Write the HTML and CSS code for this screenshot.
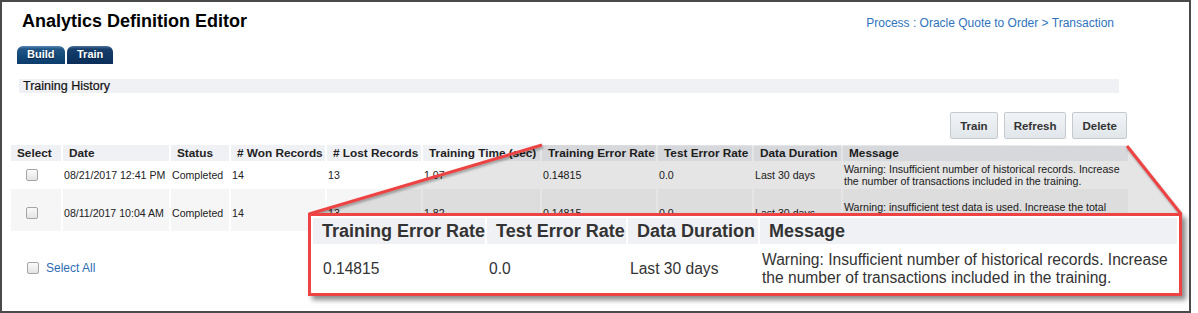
FILE: index.html
```html
<!DOCTYPE html>
<html lang="en">

<head>
    <meta charset="UTF-8">
    <title>Analytics Definition Editor</title>
    <link rel="stylesheet" href="styles.css">
</head>

<body>
    <div class="frame">
        <div class="page-header">
            <h1 class="title">Analytics Definition Editor</h1>
            <a class="crumbs" href="#">Process : Oracle Quote to Order &gt; Transaction</a>
        </div>

        <div class="tabs">
            <span class="tab tab-build">Build</span>
            <span class="tab tab-train">Train</span>
        </div>

        <div class="section-bar">Training History</div>

        <div class="actions">
            <button class="btn">Train</button>
            <button class="btn">Refresh</button>
            <button class="btn">Delete</button>
        </div>

        <table class="history">
            <colgroup>
                <col style="width:50px">
                <col style="width:106px">
                <col style="width:58px">
                <col style="width:94px">
                <col style="width:94px">
                <col style="width:117px">
                <col style="width:114px">
                <col style="width:94px">
                <col style="width:87px">
                <col>
            </colgroup>
            <thead>
                <tr>
                    <th>Select</th>
                    <th>Date</th>
                    <th>Status</th>
                    <th># Won Records</th>
                    <th># Lost Records</th>
                    <th>Training Time (sec)</th>
                    <th>Training Error Rate</th>
                    <th>Test Error Rate</th>
                    <th>Data Duration</th>
                    <th>Message</th>
                </tr>
            </thead>
            <tbody>
                <tr class="row-a">
                    <td class="sel"><input type="checkbox" class="check"></td>
                    <td class="nowrap">08/21/2017 12:41 PM</td>
                    <td>Completed</td>
                    <td>14</td>
                    <td>13</td>
                    <td>1.07</td>
                    <td>0.14815</td>
                    <td>0.0</td>
                    <td class="nowrap">Last 30 days</td>
                    <td>Warning: Insufficient number of historical records. Increase the number of transactions included in the training.</td>
                </tr>
                <tr class="row-b">
                    <td class="sel"><input type="checkbox" class="check"></td>
                    <td class="nowrap">08/11/2017 10:04 AM</td>
                    <td>Completed</td>
                    <td>14</td>
                    <td>13</td>
                    <td>1.82</td>
                    <td>0.14815</td>
                    <td>0.0</td>
                    <td class="nowrap">Last 30 days</td>
                    <td>Warning: insufficient test data is used. Increase the total number of records for training.</td>
                </tr>
            </tbody>
        </table>

        <label class="select-all">
            <input type="checkbox" class="check">
            <span>Select All</span>
        </label>

        <!-- zoom callout -->
        <svg class="zoom-lines" width="1198" height="313" viewBox="0 0 1198 313">
            <polygon points="542,145 1127,146 1182,214 308,214" fill="rgba(0,0,0,0.1)" />
            <line x1="542" y1="145" x2="309" y2="214" stroke="#ee4343" stroke-width="3" />
            <line x1="1127" y1="146" x2="1181" y2="214" stroke="#ee4343" stroke-width="3" />
        </svg>

        <div class="callout">
            <table class="callout-table">
                <colgroup>
                    <col style="width:172px">
                    <col style="width:139px">
                    <col style="width:130px">
                    <col>
                </colgroup>
                <tr>
                    <th>Training Error Rate</th>
                    <th>Test Error Rate</th>
                    <th>Data Duration</th>
                    <th>Message</th>
                </tr>
                <tr>
                    <td class="first">0.14815</td>
                    <td>0.0</td>
                    <td>Last 30 days</td>
                    <td>Warning: Insufficient number of historical records. Increase the number of transactions included in the training.</td>
                </tr>
            </table>
        </div>
    </div>
</body>

</html>
```

FILE: styles.css
```css
body {
    margin: 0;
    font-family: "Liberation Sans", Arial, sans-serif;
    background-color: #fff;
    color: #222;
}

.frame {
    position: relative;
    width: 1191px;
    height: 313px;
    box-sizing: border-box;
    border: 2px solid #4a4a4a;
    overflow: hidden;
}

.page-header {
    display: flex;
    justify-content: space-between;
    align-items: baseline;
    padding: 8px 75px 0 20px;
}

.title {
    margin: 0;
    font-size: 18px;
    line-height: 22px;
    font-weight: bold;
    color: #000;
}

.crumbs {
    font-size: 12px;
    color: #2e73bd;
    text-decoration: none;
}

/* tabs */
.tabs {
    display: flex;
    gap: 2px;
    margin-top: 14px;
    padding-left: 15px;
}

.tab {
    height: 18px;
    line-height: 17px;
    box-sizing: border-box;
    padding: 0 10px;
    font-size: 11px;
    font-weight: bold;
    color: #fff;
    text-shadow: 0 1px 1px #06203f;
    border-radius: 6px 6px 0 0;
}

.tab-build {
    width: 48px;
    background: linear-gradient(#5b87b3 0, #215686 3px, #124877 60%, #0c3c6c 100%);
}

.tab-train {
    width: 46px;
    background: linear-gradient(#50729b 0, #183f6c 3px, #0f3663 60%, #0a2e58 100%);
}

.section-bar {
    width: 1100px;
    margin: 15px 0 0 17px;
    height: 14px;
    line-height: 14px;
    padding-left: 4px;
    box-sizing: border-box;
    background-color: #f0f1f5;
    font-size: 12.5px;
    color: #111;
    -webkit-text-stroke: 0.2px #111;
}

/* buttons */
.actions {
    display: flex;
    justify-content: flex-end;
    gap: 6px;
    margin-top: 19px;
    padding-right: 62px;
}

.btn {
    height: 27px;
    padding: 0 9px;
    font-family: "Liberation Sans", Arial, sans-serif;
    font-size: 11.5px;
    font-weight: bold;
    color: #333;
    background: linear-gradient(#f1f4f7, #e1e6ea);
    border: 1px solid #c6cacf;
    border-radius: 2px;
}

/* history table */
.history {
    width: 1121px;
    margin: 4px 0 0 7px;
    table-layout: fixed;
    border-collapse: separate;
    border-spacing: 2px;
    font-size: 10.6px;
}

.history th {
    height: 16px;
    padding: 0 0 0 6px;
    line-height: 16px;
    text-align: left;
    font-size: 11.8px;
    font-weight: bold;
    color: #222;
    background-color: #f0f1f5;
    white-space: nowrap;
    overflow: hidden;
}

.history td {
    padding: 0 0 0 1px;
    line-height: 12px;
    vertical-align: middle;
    color: #222;
}

.history td.nowrap {
    white-space: nowrap;
}

.history .row-a td {
    height: 24px;
}

.history .row-b td {
    height: 42px;
    padding-top: 6px;
    box-sizing: border-box;
    background-color: #f6f6f6;
}

.history td.sel {
    padding-left: 15px;
}

.check {
    appearance: none;
    -webkit-appearance: none;
    display: block;
    width: 12px;
    height: 12px;
    margin: 0;
    box-sizing: border-box;
    border: 1px solid #a5a5a5;
    border-radius: 2px;
    background: linear-gradient(#fafafa, #e4e4e4);
}

.select-all {
    display: flex;
    align-items: center;
    gap: 7px;
    margin: 28px 0 0 25px;
    font-size: 12px;
    color: #2e6db4;
}

/* zoom callout overlay */
.zoom-lines {
    position: absolute;
    left: -2px;
    top: -2px;
    pointer-events: none;
}

.zoom-lines line {
    filter: drop-shadow(1px 2px 1px rgba(0, 0, 0, 0.3));
}

.callout {
    position: absolute;
    left: 306px;
    top: 211px;
    width: 874px;
    height: 83px;
    box-sizing: border-box;
    border: 3px solid #ee4343;
    background-color: #fff;
    box-shadow: 4px 4px 5px rgba(0, 0, 0, 0.45);
}

.callout-table {
    width: 100%;
    table-layout: fixed;
    border-collapse: separate;
    border-spacing: 2px;
    color: #333;
}

.callout-table th {
    height: 26px;
    padding: 0 0 0 9px;
    text-align: left;
    font-size: 18px;
    font-weight: bold;
    background-color: #f0f1f5;
    white-space: nowrap;
}

.callout-table td {
    height: 45px;
    padding: 0 0 0 2px;
    font-size: 15.6px;
    line-height: 18px;
    vertical-align: middle;
}

.callout-table td.first {
    padding-left: 10px;
}
```
